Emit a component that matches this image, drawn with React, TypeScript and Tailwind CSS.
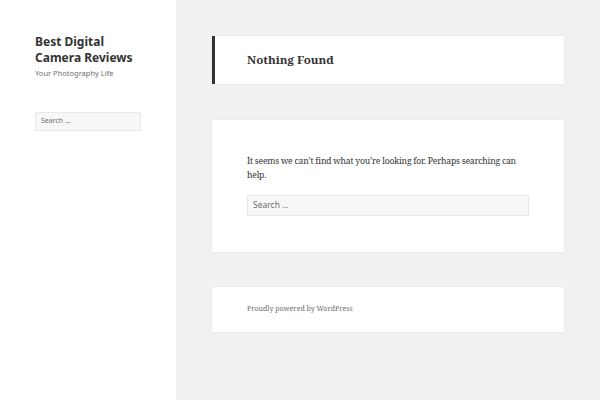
export default function App() {
  const serif = { fontFamily: '"Noto Serif", "DejaVu Serif", serif' };
  return (
    <div className="flex w-[600px] h-[400px] bg-[#f1f1f1] overflow-hidden">
      <aside className="w-[176px] shrink-0 bg-white pl-[35px] pr-[35px] pt-[34px] font-['Noto_Sans',sans-serif]">
        <h1 className="text-[12px] leading-[16px] font-bold text-[#333]">Best Digital Camera Reviews</h1>
        <p className="mt-[1px] text-[7.5px] leading-[12px] text-[#707070]">Your Photography Life</p>
        <div className="mt-[33px] h-[19px] w-[106px] bg-[#f7f7f7] border border-[#eaeaea] px-[5px] flex items-center">
          <span className="text-[7px] text-[#707070]">Search …</span>
        </div>
      </aside>
      <main className="flex-1 px-[36px] pt-[36px]" style={serif}>
        <header className="h-[48px] bg-white border-l-[3px] border-[#333] pl-[32px] flex items-center shadow-[0_0_1px_rgba(0,0,0,0.15)]">
          <h2 className="text-[11.6px] font-bold text-[#333]">Nothing Found</h2>
        </header>
        <section className="mt-[36px] h-[132px] bg-white pl-[35px] pr-[35px] pt-[34px] shadow-[0_0_1px_rgba(0,0,0,0.15)]">
          <p className="text-[8.6px] tracking-[-0.2px] leading-[14px] text-[#333]">It seems we can’t find what you’re looking for. Perhaps searching can help.</p>
          <div className="mt-[13px] h-[21px] bg-[#f7f7f7] border border-[#eaeaea] px-[5px] flex items-center">
            <span className="text-[8.5px] text-[#707070] font-['Noto_Sans',sans-serif]">Search …</span>
          </div>
        </section>
        <footer className="mt-[35px] h-[45px] bg-white pl-[35px] flex items-center shadow-[0_0_1px_rgba(0,0,0,0.15)]">
          <span className="text-[7px] text-[#707070]">Proudly powered by WordPress</span>
        </footer>
      </main>
    </div>
  );
}
